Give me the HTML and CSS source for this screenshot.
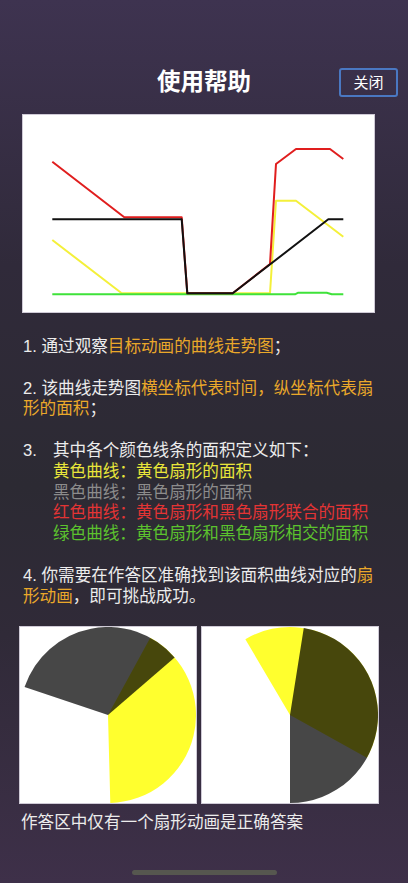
FILE: index.html
```html
<!DOCTYPE html>
<html lang="zh">
<head>
<meta charset="utf-8">
<title>使用帮助</title>
<link rel="stylesheet" href="styles.css">
</head>
<body>
<div class="page">
  <header class="header">
    <div></div>
    <h1 class="title">使用帮助</h1>
    <button class="close">关闭</button>
  </header>

  <div class="chart">
    <svg viewBox="0 0 351 197" width="351" height="197">
      <polyline class="ln-yellow" points="29.3,125 98.7,178.3 247,178.3 253,85.7 273,85.7 320.3,121.7"/>
      <polyline class="ln-green" points="29.3,179.3 272,179.3 275.3,177.7 303.7,177.7 308.7,179.3 320.3,179.3"/>
      <polyline class="ln-red" points="29.3,46.7 101.3,102.3 158.7,102.3 164.3,178.3 209.7,178.3 247,149 253,49 273,34 307,34 320.3,44"/>
      <polyline class="ln-black" points="29.3,104.3 158.7,104.3 164.3,178.3 209.7,178.3 305.3,104.3 320.3,104.3"/>
    </svg>
  </div>

  <div class="help">
    <p>1. 通过观察<span class="hl">目标动画的曲线走势图</span>；</p>
    <p>2. 该曲线走势图<span class="hl">横坐标代表时间，纵坐标代表扇</span><br><span class="hl">形的面积</span>；</p>
    <div class="para">
      <div><span class="num">3.</span>其中各个颜色线条的面积定义如下：</div>
      <div class="def c-yellow">黄色曲线：黄色扇形的面积</div>
      <div class="def c-gray">黑色曲线：黑色扇形的面积</div>
      <div class="def c-red">红色曲线：黄色扇形和黑色扇形联合的面积</div>
      <div class="def c-green">绿色曲线：黄色扇形和黑色扇形相交的面积</div>
    </div>
    <p>4. 你需要在作答区准确找到该面积曲线对应的<span class="hl">扇</span><br><span class="hl">形动画</span>，即可挑战成功。</p>
  </div>

  <div class="pies">
    <div class="pie">
      <svg viewBox="0 0 176 176" width="176" height="176">
        <path class="sec-yellow" d="M88 88 L130.26 10.81 A88 88 0 0 1 90.30 175.97 Z"/>
        <path class="sec-black" d="M88 88 L4.55 60.08 A88 88 0 0 1 154.62 30.50 Z"/>
      </svg>
    </div>
    <div class="pie">
      <svg viewBox="0 0 176 176" width="176" height="176">
        <path class="sec-yellow" d="M88 88 L43.34 12.18 A88 88 0 0 1 164.89 130.80 Z"/>
        <path class="sec-black" d="M88 88 L101.77 1.08 A88 88 0 0 1 88 176 Z"/>
      </svg>
    </div>
  </div>

  <p class="caption">作答区中仅有一个扇形动画是正确答案</p>

  <div class="home-bar"></div>
</div>
</body>
</html>
```

FILE: styles.css
```css
html, body {
  margin: 0;
  padding: 0;
}

body {
  min-height: 883px;
  background: linear-gradient(180deg, #3e3350 0%, #302a3a 30%, #2c2a33 55%, #302a38 72%, #3e3049 100%);
  font-family: "Liberation Sans", "Noto Sans CJK SC", sans-serif;
  color: #ececec;
}

.page {
  display: flex;
  flex-direction: column;
  min-height: 883px;
}

.header {
  display: grid;
  grid-template-columns: 1fr auto 1fr;
  align-items: center;
  padding: 68px 10px 0;
  height: 29px;
}

.title {
  margin: 0;
  font-size: 23.5px;
  font-weight: 600;
  color: #ffffff;
  line-height: 29px;
}

.close {
  justify-self: end;
  width: 59px;
  height: 29px;
  padding: 0;
  background: transparent;
  border: 2px solid #4a78c2;
  border-radius: 3px;
  color: #ffffff;
  font-family: "Liberation Sans", "Noto Sans CJK SC", sans-serif;
  font-size: 15px;
  line-height: 25px;
}

.chart {
  margin: 18px 0 0 23px;
  width: 351px;
  height: 197px;
  background: #ffffff;
  box-shadow: 0 0 0 1px #cfcad6;
}

.chart svg {
  display: block;
}

.chart polyline {
  fill: none;
  stroke-width: 2;
  stroke-linejoin: round;
}

.ln-yellow { stroke: #f4f03a; }
.ln-green { stroke: #3fe23a; }
.ln-red { stroke: #e01e1e; }
.ln-black { stroke: #111111; }

.help {
  margin-top: 25px;
  padding: 0 23px;
  font-size: 16.6px;
  line-height: 20.8px;
}

.help p,
.help .para {
  margin: 0 0 20.8px;
}

.hl { color: #eaa82a; }

.num {
  display: inline-block;
  width: 30px;
}

.def { padding-left: 30px; }
.c-yellow { color: #e9e63a; }
.c-gray { color: #8c8c8c; }
.c-red { color: #e33434; }
.c-green { color: #5cc22e; }

.pies {
  display: flex;
  gap: 6px;
  margin: -1px 0 0 20px;
}

.pie {
  width: 176px;
  height: 176px;
  background: #ffffff;
  box-shadow: 0 0 0 1px #cfcad6;
}

.pie svg { display: block; }

.sec-yellow { fill: #ffff2e; }
.sec-black { fill: #000000; fill-opacity: 0.72; }

.caption {
  margin: 10px 0 0;
  padding-left: 21px;
  font-size: 16.6px;
  line-height: 20.8px;
  color: #ececec;
}

.home-bar {
  align-self: center;
  width: 145px;
  height: 5px;
  margin-top: 36px;
  border-radius: 3px;
  background: #56574f;
}
```
